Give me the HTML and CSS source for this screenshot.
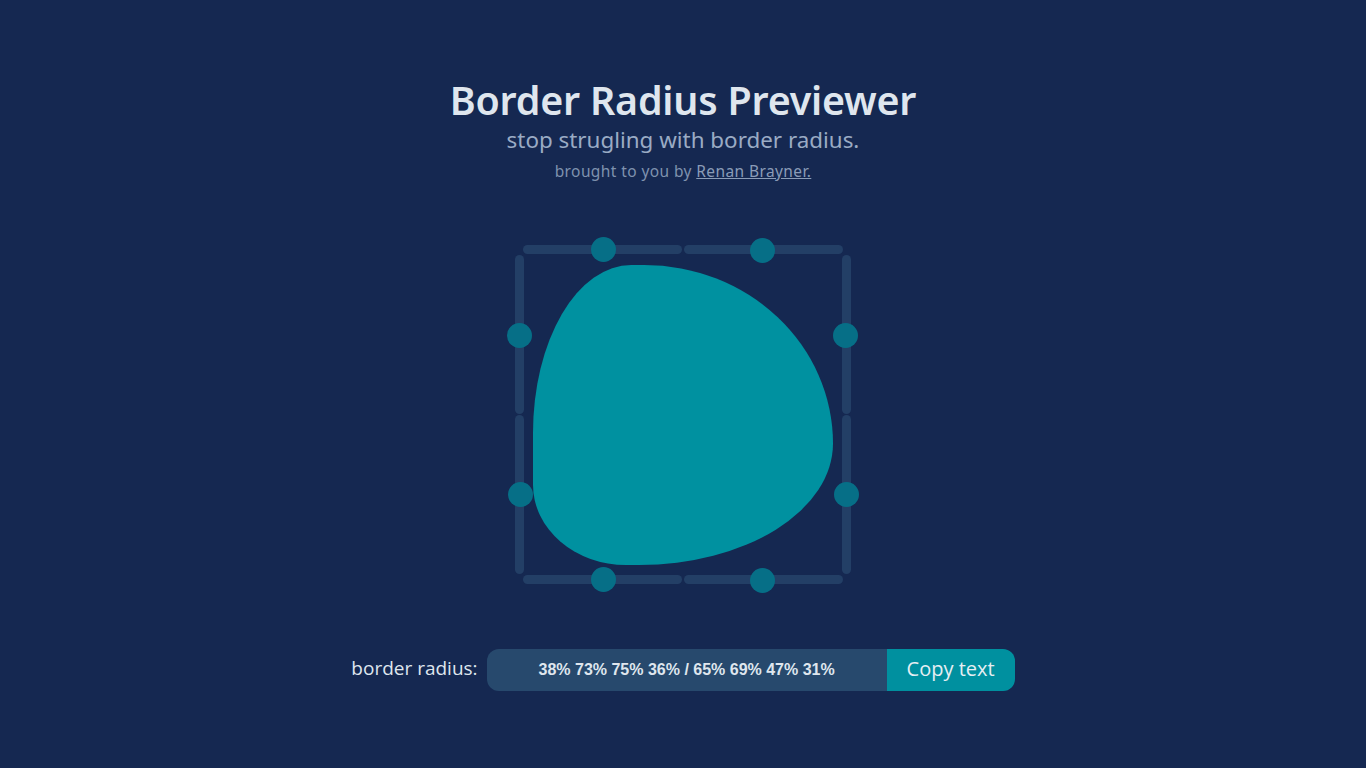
FILE: index.html
```html
<!DOCTYPE html>
<html lang="en">
<head>
<meta charset="utf-8">
<title>Border Radius Previewer</title>
<link rel="stylesheet" href="styles.css">
</head>
<body>
<main class="page">
  <header class="header">
    <h1 class="title">Border Radius Previewer</h1>
    <p class="subtitle">stop strugling with border radius.</p>
    <p class="credit">brought to you by <a href="#" class="credit-link">Renan Brayner.</a></p>
  </header>

  <section class="stage">
    <div class="rail rail-h rail-top rail-a"></div>
    <div class="rail rail-h rail-top rail-b"></div>
    <div class="rail rail-h rail-bottom rail-a"></div>
    <div class="rail rail-h rail-bottom rail-b"></div>
    <div class="rail rail-v rail-left rail-c"></div>
    <div class="rail rail-v rail-left rail-d"></div>
    <div class="rail rail-v rail-right rail-c"></div>
    <div class="rail rail-v rail-right rail-d"></div>

    <div class="shape"></div>

    <span class="handle h-top-1"></span>
    <span class="handle h-top-2"></span>
    <span class="handle h-left-1"></span>
    <span class="handle h-left-2"></span>
    <span class="handle h-right-1"></span>
    <span class="handle h-right-2"></span>
    <span class="handle h-bottom-1"></span>
    <span class="handle h-bottom-2"></span>
  </section>

  <section class="output">
    <label class="output-label">border radius:</label>
    <div class="output-field">
      <div class="output-value">38% 73% 75% 36% / 65% 69% 47% 31%</div>
      <button class="copy-btn">Copy text</button>
    </div>
  </section>
</main>
</body>
</html>
```

FILE: styles.css
```css
* { box-sizing: border-box; }

html, body {
  margin: 0;
  padding: 0;
  background: #152851;
  height: 100%;
}

.page {
  display: flex;
  flex-direction: column;
  align-items: center;
  font-family: "Noto Sans", "Open Sans", sans-serif;
}

.header {
  display: flex;
  flex-direction: column;
  align-items: center;
  padding-top: 74px;
}

.title {
  margin: 0;
  font-size: 39.4px;
  line-height: 52px;
  font-weight: 600;
  color: #dfe6ee;
  letter-spacing: -0.2px;
}

.subtitle {
  margin: 0;
  font-size: 22.4px;
  line-height: 28px;
  color: #9aabc4;
}

.credit {
  margin: 7px 0 0;
  font-size: 15.5px;
  line-height: 20px;
  color: #7f92ae;
  letter-spacing: 0.4px;
}

.credit-link {
  color: #8a9cb7;
  text-decoration: underline;
}

.stage {
  position: relative;
  width: 344px;
  height: 344px;
  margin-top: 62px;
}

.shape {
  position: absolute;
  left: 22px;
  top: 22px;
  width: 300px;
  height: 300px;
  background: #0091a0;
  border-radius: 38% 73% 75% 36% / 65% 69% 47% 31%;
}

.rail {
  position: absolute;
  background: #233f66;
  border-radius: 5px;
}

.rail-h { height: 9px; width: 159px; }
.rail-v { width: 9px; height: 159px; }

.rail-top { top: 1.5px; }
.rail-bottom { top: 331.5px; }
.rail-a { left: 12px; }
.rail-b { left: 173px; }

.rail-left { left: 4px; }
.rail-right { left: 330.5px; }
.rail-c { top: 12px; }
.rail-d { top: 172px; }

.handle {
  position: absolute;
  width: 25px;
  height: 25px;
  margin: -12.5px 0 0 -12.5px;
  border-radius: 50%;
  background: #066f87;
}

.h-top-1 { left: 92px; top: 6px; }
.h-top-2 { left: 251px; top: 7px; }
.h-left-1 { left: 8px; top: 92px; }
.h-left-2 { left: 9px; top: 251px; }
.h-right-1 { left: 334px; top: 92px; }
.h-right-2 { left: 335px; top: 251px; }
.h-bottom-1 { left: 92px; top: 336px; }
.h-bottom-2 { left: 251px; top: 337px; }

.output {
  display: flex;
  align-items: center;
  gap: 9px;
  margin-top: 62px;
}

.output-label {
  font-family: "Open Sans", "Noto Sans", sans-serif;
  font-size: 19px;
  line-height: 26px;
  padding-bottom: 4px;
  color: #dfe6ee;
}

.output-field {
  display: flex;
  height: 42px;
  border-radius: 12px;
  overflow: hidden;
}

.output-value {
  width: 400px;
  display: flex;
  align-items: center;
  justify-content: center;
  background: #27496d;
  color: #dfe6ee;
  font-family: "Liberation Sans", Arial, sans-serif;
  font-weight: 700;
  font-size: 16px;
}

.copy-btn {
  width: 128px;
  border: 0;
  background: #00909f;
  color: #e6eef3;
  font-family: "Open Sans", "Noto Sans", sans-serif;
  font-size: 20px;
  padding: 0 0 4px;
  cursor: pointer;
}
```
